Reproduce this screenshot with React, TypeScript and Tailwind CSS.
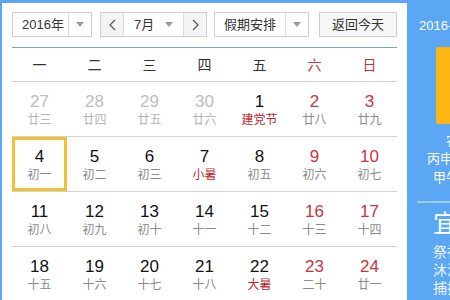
type Day = {
  n: number;
  lunar: string;
  other?: boolean;
  fest?: boolean;
  today?: boolean;
};

const weekdays = ["一", "二", "三", "四", "五", "六", "日"];

const weeks: Day[][] = [
  [
    { n: 27, lunar: "廿三", other: true },
    { n: 28, lunar: "廿四", other: true },
    { n: 29, lunar: "廿五", other: true },
    { n: 30, lunar: "廿六", other: true },
    { n: 1, lunar: "建党节", fest: true },
    { n: 2, lunar: "廿八" },
    { n: 3, lunar: "廿九" },
  ],
  [
    { n: 4, lunar: "初一", today: true },
    { n: 5, lunar: "初二" },
    { n: 6, lunar: "初三" },
    { n: 7, lunar: "小暑", fest: true },
    { n: 8, lunar: "初五" },
    { n: 9, lunar: "初六" },
    { n: 10, lunar: "初七" },
  ],
  [
    { n: 11, lunar: "初八" },
    { n: 12, lunar: "初九" },
    { n: 13, lunar: "初十" },
    { n: 14, lunar: "十一" },
    { n: 15, lunar: "十二" },
    { n: 16, lunar: "十三" },
    { n: 17, lunar: "十四" },
  ],
  [
    { n: 18, lunar: "十五" },
    { n: 19, lunar: "十六" },
    { n: 20, lunar: "十七" },
    { n: 21, lunar: "十八" },
    { n: 22, lunar: "大暑", fest: true },
    { n: 23, lunar: "二十" },
    { n: 24, lunar: "廿一" },
  ],
];

function Caret() {
  return (
    <svg width="8" height="5" viewBox="0 0 8 5">
      <path d="M0 0h8L4 5z" fill="#9a9a9a" />
    </svg>
  );
}

function Chevron({ dir }: { dir: "left" | "right" }) {
  return (
    <svg width="7" height="12" viewBox="0 0 7 12">
      <path
        d={dir === "left" ? "M6 1L1 6l5 5" : "M1 1l5 5-5 5"}
        fill="none"
        stroke="#555"
        strokeWidth="1.2"
      />
    </svg>
  );
}

function Select({ label, w }: { label: string; w: number }) {
  return (
    <div className="flex h-[25px] border border-[#cfcfcf] bg-white">
      <div className="flex items-center pl-[9px]" style={{ width: w }}>
        {label}
      </div>
      <div className="flex w-[23px] items-center justify-center border-l border-[#dcdcdc]">
        <Caret />
      </div>
    </div>
  );
}

function DayCell({ d, weekend }: { d: Day; weekend: boolean }) {
  let numColor = "text-[#111]";
  if (d.other) numColor = "text-[#bdbdbd]";
  else if (weekend) numColor = "text-[#cc3340]";
  let lunarColor = d.other ? "text-[#b5b5b5]" : "text-[#8a8a8a]";
  if (d.fest) lunarColor = "text-[#c4262e]";
  return (
    <div
      className={`flex h-[54px] flex-col items-center pt-[10px] ${
        d.today ? "shadow-[inset_0_0_0_3px_#f1c133]" : ""
      }`}
    >
      <div className={`text-[17px] leading-[20px] ${numColor}`}>{d.n}</div>
      <div className={`text-[12px] leading-[16px] ${lunarColor}`}>{d.lunar}</div>
    </div>
  );
}

export default function App() {
  return (
    <div className="flex h-[300px] w-[450px] overflow-hidden bg-[#5ba7f4] pl-[2px] pt-[3px] font-['Liberation_Sans','Noto_Sans_CJK_SC',sans-serif]">
      <div className="w-[405px] shrink-0 bg-white px-[10px] pt-[9px] text-[13px] text-[#333]">
        {/* toolbar */}
        <div className="flex items-center">
          <Select label="2016年" w={55} />
          <div className="ml-[8px] flex h-[25px] border border-[#cfcfcf]">
            <div className="flex w-[22px] items-center justify-center bg-[#f4f4f4]">
              <Chevron dir="left" />
            </div>
            <div className="flex w-[61px] items-center justify-between border-x border-[#dcdcdc] pl-[10px] pr-[10px]">
              <span>7月</span>
              <Caret />
            </div>
            <div className="flex w-[22px] items-center justify-center bg-[#f4f4f4]">
              <Chevron dir="right" />
            </div>
          </div>
          <div className="ml-[7px]">
            <Select label="假期安排" w={70} />
          </div>
          <button className="ml-[10px] flex h-[25px] w-[81px] items-center justify-center border border-[#cfcfcf] bg-[#f7f7f7] text-[13px] text-[#333]">
            返回今天
          </button>
        </div>

        <div className="mt-[10px] h-[1px] bg-[#6aa6dc]" />

        {/* weekday header */}
        <div className="grid h-[34px] grid-cols-7 border-b border-[#d3d3d3] text-[14px]">
          {weekdays.map((w, i) => (
            <div
              key={w}
              className={`flex items-center justify-center pt-[1px] ${
                i >= 5 ? "text-[#c4343c]" : "text-[#333]"
              }`}
            >
              {w}
            </div>
          ))}
        </div>

        {weeks.map((week, r) => (
          <div key={r} className="grid grid-cols-7 border-b border-[#d3d3d3]">
            {week.map((d, i) => (
              <DayCell key={i} d={d} weekend={i >= 5} />
            ))}
          </div>
        ))}
      </div>

      {/* right panel, clipped */}
      <div className="w-[43px] shrink-0 overflow-hidden">
        <div className="w-[180px] text-white">
          <div className="pl-[12px] pt-[15px] text-[13px] leading-[16px]">2016-07-04 星期一</div>
          <div className="ml-[29px] mt-[13px] flex h-[77px] w-[122px] items-center justify-center rounded-[2px] bg-[#fdb714] text-[48px]">
            4
          </div>
          <div className="ml-[39px] mt-[8px] text-[13px] leading-[18px]">农历六月初一</div>
          <div className="ml-[20px] text-[13px] leading-[18px]">丙申年 乙未月 甲午日</div>
          <div className="ml-[26px] text-[13px] leading-[20px]">甲午日 【属猴】</div>
          <div className="ml-[10px] mr-[10px] mt-[13px] h-[2px] bg-[#9ecbf6]" />
          <div className="ml-[26px] mt-[8px] text-[24px] leading-[26px]">宜</div>
          <div className="ml-[26px] mt-[6px] text-[14px] leading-[18px] text-[#eaf3fd]">
            <div>祭祀 出行</div>
            <div>沐浴 嫁娶</div>
            <div>捕捉 纳财</div>
          </div>
        </div>
      </div>
    </div>
  );
}
